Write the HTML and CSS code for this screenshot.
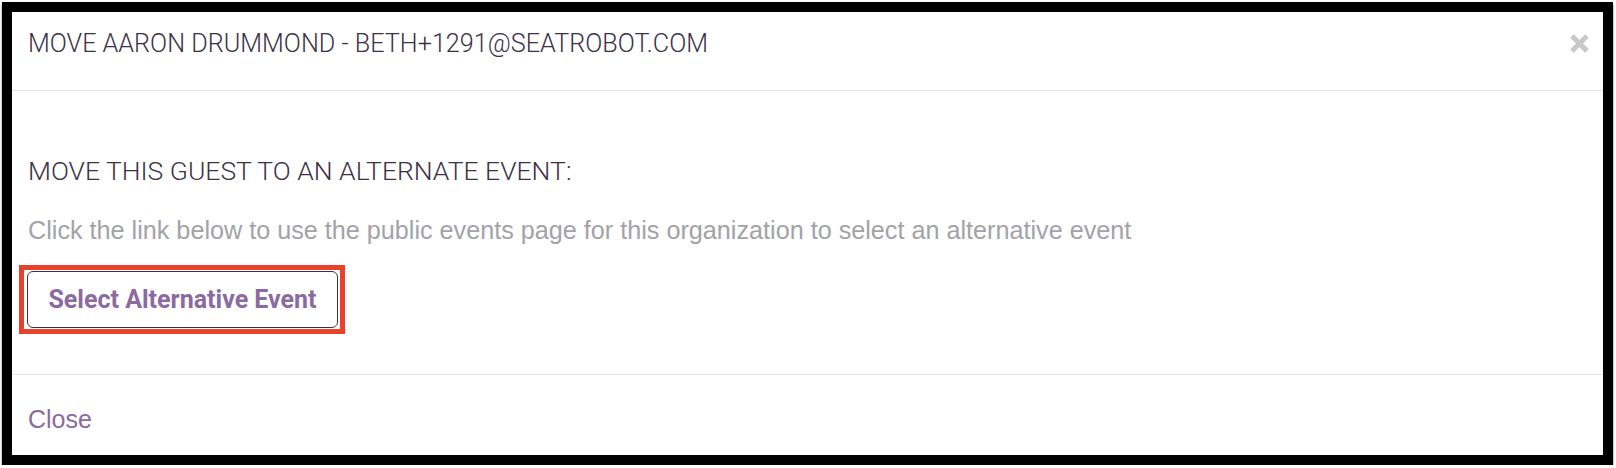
FILE: index.html
```html
<!DOCTYPE html>
<html>
<head>
<meta charset="utf-8">
<link rel="stylesheet" href="styles.css">
</head>
<body>
<div class="frame">
  <div class="modal-header">
    <h4 class="modal-title">MOVE AARON DRUMMOND - BETH+1291@SEATROBOT.COM</h4>
    <button class="close" aria-label="Close">
      <svg width="21" height="21" viewBox="0 0 21 21"><path d="M3 3 L18 18 M18 3 L3 18" stroke="#c8c8c8" stroke-width="5" stroke-linecap="butt"/></svg>
    </button>
  </div>
  <div class="modal-body">
    <h5 class="section-title">MOVE THIS GUEST TO AN ALTERNATE EVENT:</h5>
    <p class="hint">Click the link below to use the public events page for this organization to select an alternative event</p>
    <div class="btn-wrap">
      <a class="btn-outline">Select Alternative Event</a>
      <span class="highlight"></span>
    </div>
  </div>
  <div class="modal-footer">
    <a class="footer-link">Close</a>
  </div>
</div>
</body>
</html>
```

FILE: styles.css
```css
html, body {
  margin: 0;
  padding: 0;
  background: #ffffff;
}
.frame {
  margin: 2px 3px 0 2px;
  height: 443px;
  border: 10px solid #000;
  background: #fff;
  display: flex;
  flex-direction: column;
  box-shadow: 0 2px 2px rgba(0,0,0,0.55);
}
.modal-header {
  height: 78px;
  box-sizing: content-box;
  border-bottom: 1px solid #e5e5e5;
  display: flex;
  align-items: flex-start;
  justify-content: space-between;
  padding: 0 13px 0 16px;
}
.modal-title {
  margin: 17px 0 0 0;
  font-family: Roboto, "Liberation Sans", sans-serif;
  font-weight: 300;
  font-size: 25.2px;
  line-height: 30px;
  color: #3b3146;
}
.close {
  border: 0;
  background: none;
  padding: 0;
  margin: 21px 0 0 0;
  width: 21px;
  height: 21px;
  display: flex;
}
.modal-body {
  height: 284px;
  box-sizing: border-box;
  border-bottom: 1px solid #e5e5e5;
  padding: 65px 16px 0 16px;
  display: flex;
  flex-direction: column;
  align-items: flex-start;
}
.section-title {
  margin: 0;
  font-family: Roboto, "Liberation Sans", sans-serif;
  font-weight: 300;
  font-size: 26.5px;
  line-height: 30px;
  color: #3b3146;
}
.hint {
  margin: 29px 0 0 0;
  font-family: "Liberation Sans", Arial, sans-serif;
  font-size: 25.2px;
  line-height: 30px;
  color: #a2a2a8;
}
.btn-wrap {
  position: relative;
  margin: 26px 0 0 -1px;
}
.btn-outline {
  display: flex;
  align-items: center;
  justify-content: center;
  box-sizing: border-box;
  width: 311px;
  height: 57px;
  border: 1px solid #3b3146;
  border-radius: 6px;
  font-family: Roboto, "Liberation Sans", sans-serif;
  font-weight: 700;
  font-size: 25px;
  color: #8a6a9f;
}
.highlight {
  position: absolute;
  left: -8px;
  top: -6px;
  right: -7px;
  bottom: -6px;
  border: 5px solid #e8412c;
}
.modal-footer {
  flex: 1;
  padding: 29px 16px 0 16px;
}
.footer-link {
  font-family: "Liberation Sans", Arial, sans-serif;
  font-size: 25px;
  line-height: 30px;
  color: #8a6a9f;
}
```
